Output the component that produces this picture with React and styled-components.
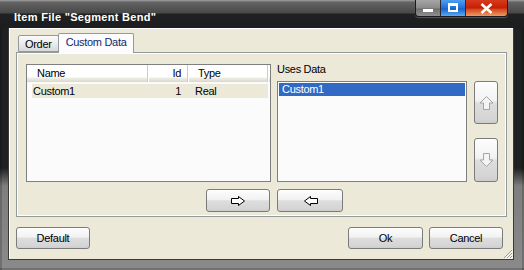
import React from 'react';
import styled, { createGlobalStyle } from 'styled-components';

const Global = createGlobalStyle`
  html, body { margin: 0; padding: 0; background: #fff; }
  body { font-family: "Liberation Sans", Arial, sans-serif; font-size: 11px; }
  * { box-sizing: border-box; }
`;

const Window = styled.div`
  width: 524px;
  height: 270px;
  display: flex;
  flex-direction: column;
  overflow: hidden;
  background: linear-gradient(to bottom, #1f2022 0px, #1f2022 168px, #4a4a4a 176px, #7e7e7e 186px, #8a8a8a 100%);
  box-shadow: inset 2px 0 0 rgba(0,0,0,0.18), inset -2px 0 0 rgba(0,0,0,0.18), inset 0 -2px 0 rgba(0,0,0,0.18);
`;

const TitleBar = styled.div`
  height: 28px;
  flex: none;
  display: flex;
  align-items: flex-start;
  padding: 0 16px 0 14px;
  background: linear-gradient(to bottom, #9a9a9a 0px, #8c8c8c 1px, #646464 2px, #484848 13px, #1f2123 14px, #1c1d1f 100%);
`;

const Title = styled.div`
  margin-top: 11px;
  color: #fff;
  font-weight: bold;
  font-size: 11px;
  line-height: 12px;
  letter-spacing: 0.3px;
  white-space: nowrap;
`;

const Captions = styled.div`
  margin-left: auto;
  display: flex;
  height: 17px;
  border: 1px solid #1a1a1a;
  border-top: none;
  border-radius: 0 0 4px 4px;
  overflow: hidden;
  box-shadow: 0 1px 1px rgba(255,255,255,0.25);
`;

const CapBtn = styled.div`
  width: ${p => p.$w}px;
  height: 100%;
  display: flex;
  align-items: flex-start;
  justify-content: center;
  border-left: ${p => (p.$first ? 'none' : '1px solid #2a2a2a')};
  background: ${p => p.$bg};
`;

const MinDash = styled.div`
  margin-top: 9px;
  width: 10px;
  height: 3px;
  background: #fff;
`;

const MaxBox = styled.div`
  margin-top: 3px;
  width: 10px;
  height: 9px;
  border: 2px solid #fff;
  border-top-width: 3px;
`;

const Client = styled.div`
  flex: 1;
  position: relative;
  margin: 0 10px 10px 8px;
  border: 1px solid #3a3a3a;
  border-top: none;
  background: #ece9d8;
  box-shadow: inset 1px 1px 0 #fff;
  padding: 5px 6px 10px 7px;
  display: flex;
  flex-direction: column;
  color: #000;
`;

const TabStrip = styled.div`
  height: 20px;
  margin-bottom: -1px;
  padding-left: 2px;
  display: flex;
  align-items: flex-end;
  position: relative;
  z-index: 1;
`;

const Tab = styled.div`
  height: ${p => (p.$active ? 20 : 17)}px;
  margin-bottom: ${p => (p.$active ? 0 : 1)}px;
  padding: ${p => (p.$active ? '3px 6px 0 7px' : '3px 6px 0 6px')};
  border: 1px solid #919b9c;
  border-bottom: ${p => (p.$active ? 'none' : '1px solid #919b9c')};
  border-radius: 2px 2px 0 0;
  line-height: 11px;
  letter-spacing: -0.3px;
  color: ${p => (p.$active ? '#10266e' : '#000')};
  background: ${p => (p.$active ? '#fcfcfe' : 'linear-gradient(to bottom, #fafafa 0%, #ececec 50%, #d8d8d8 100%)')};
  margin-right: ${p => (p.$active ? 0 : -1)}px;
  white-space: nowrap;
`;

const Panel = styled.div`
  border: 1px solid #919b9c;
  box-shadow: inset 1px 1px 0 #fff, inset -1px -1px 0 #fff;
  background: #ece9d8;
  padding: 11px 8px 4px 9px;
  display: flex;
  flex-direction: column;
  gap: 7px;
`;

const TopRow = styled.div`
  display: flex;
  height: 118px;
`;

const ListBox = styled.div`
  width: ${p => p.$w}px;
  height: ${p => p.$h}px;
  border: 1px solid #7f7f7f;
  background: #fbfbfb;
  padding: ${p => p.$pad || 0}px;
  flex: none;
`;

const Header = styled.div`
  display: flex;
  height: 17px;
  background: linear-gradient(to bottom, #fff 0px, #fff 12px, #efeee6 13px, #e6e4d8 15px, #d9d7cb 17px);
`;

const HeadCell = styled.div`
  width: ${p => p.$w}px;
  height: 100%;
  padding: 0 ${p => p.$pr || 0}px 0 ${p => p.$pl || 0}px;
  text-align: ${p => p.$align || 'left'};
  line-height: 16px;
  letter-spacing: -0.3px;
  border-right: 1px solid #cfcdc2;
  box-shadow: 1px 0 0 #fff;
  white-space: nowrap;
`;

const Row = styled.div`
  display: flex;
  margin: 2px 0 0 5px;
  width: 236px;
  height: 14px;
  background: #ece9d8;
`;

const Cell = styled.div`
  width: ${p => p.$w}px;
  padding: 0 ${p => p.$pr || 0}px 0 ${p => p.$pl || 0}px;
  text-align: ${p => p.$align || 'left'};
  line-height: 14px;
  letter-spacing: -0.3px;
  white-space: nowrap;
`;

const RightCol = styled.div`
  width: 190px;
  margin-left: 6px;
  display: flex;
  flex-direction: column;
`;

const Label = styled.div`
  height: 17px;
  line-height: 11px;
  letter-spacing: -0.3px;
`;

const SelItem = styled.div`
  height: 13px;
  line-height: 13px;
  padding-left: 3px;
  background: #316ac5;
  color: #fff;
  letter-spacing: -0.3px;
`;

const SideCol = styled.div`
  width: 24px;
  margin-left: 7px;
  padding-top: 17px;
  display: flex;
  flex-direction: column;
  gap: 14px;
`;

const Button = styled.div`
  width: ${p => p.$w}px;
  height: ${p => p.$h || 22}px;
  flex: none;
  border: 1px solid #7b7b7b;
  border-radius: 3px;
  background: linear-gradient(to bottom, #fdfdfd 0%, #f2f2f2 45%, #dddddd 52%, #d5d5d5 88%, #cdcdcd 100%);
  box-shadow: inset 0 1px 0 #fff;
  display: flex;
  align-items: center;
  justify-content: center;
  letter-spacing: -0.3px;
  line-height: 12px;
  color: #000;
`;

const ArrowRow = styled.div`
  display: flex;
  height: 23px;
`;

const ArrowCell = styled.div`
  width: ${p => p.$w}px;
  margin-left: ${p => p.$ml || 0}px;
  display: flex;
  justify-content: ${p => p.$justify};
`;

const ButtonRow = styled.div`
  margin-top: 10px;
  margin-right: 4px;
  display: flex;
  gap: 6px;
`;

const Spacer = styled.div`
  flex: 1;
`;

const Grip = styled.svg`
  position: absolute;
  right: 0;
  bottom: 0;
`;

const ArrowH = ({ dir }) => (
  <svg width="15" height="10" viewBox="0 0 15 10" style={{ transform: dir === 'left' ? 'scaleX(-1)' : 'none' }}>
    <polygon points="0.5,2.5 7.5,2.5 7.5,0.5 13.5,5 7.5,9.5 7.5,7.5 0.5,7.5" fill="#fff" stroke="#000" strokeWidth="1" />
  </svg>
);

const ArrowV = ({ dir }) => (
  <svg width="15" height="14" viewBox="0 0 15 14" style={{ transform: dir === 'down' ? 'scaleY(-1)' : 'none' }}>
    <polygon points="7.5,0.5 14,7 10.5,7 10.5,13.5 4.5,13.5 4.5,7 1,7" fill="#f4f4f4" stroke="#a4a4a4" strokeWidth="1" />
  </svg>
);

export default function App() {
  return (
    <>
      <Global />
      <Window>
        <TitleBar>
          <Title>Item File "Segment Bend"</Title>
          <Captions>
            <CapBtn $first $w={24} $bg="linear-gradient(to bottom, #a6a6a6 0%, #8a8a8a 50%, #6e6e6e 55%, #8e8e8e 100%)">
              <MinDash />
            </CapBtn>
            <CapBtn $w={25} $bg="linear-gradient(to bottom, #4d9ef0 0%, #1f6fd8 50%, #1464d0 55%, #5eaaf0 100%)">
              <MaxBox />
            </CapBtn>
            <CapBtn $w={42} $bg="linear-gradient(to bottom, #d83a1c 0%, #c41f06 50%, #d2481c 58%, #ec9a66 100%)">
              <svg width="13" height="11" viewBox="0 0 13 11" style={{ marginTop: 3 }}>
                <path d="M1.5 1 L11.5 10 M11.5 1 L1.5 10" stroke="#fff" strokeWidth="2.6" />
              </svg>
            </CapBtn>
          </Captions>
        </TitleBar>
        <Client>
          <TabStrip>
            <Tab>Order</Tab>
            <Tab $active>Custom Data</Tab>
          </TabStrip>
          <Panel>
            <TopRow>
              <ListBox $w={245} $h={118}>
                <Header>
                  <HeadCell $w={121} $pl={10}>Name</HeadCell>
                  <HeadCell $w={40} $align="right" $pr={6}>Id</HeadCell>
                  <HeadCell $w={80} $pl={10}>Type</HeadCell>
                </Header>
                <Row>
                  <Cell $w={116} $pl={1}>Custom1</Cell>
                  <Cell $w={40} $align="right" $pr={7}>1</Cell>
                  <Cell $w={80} $pl={7}>Real</Cell>
                </Row>
              </ListBox>
              <RightCol>
                <Label>Uses Data</Label>
                <ListBox $w={190} $h={101} $pad={1}>
                  <SelItem>Custom1</SelItem>
                </ListBox>
              </RightCol>
              <SideCol>
                <Button $w={24} $h={43}><ArrowV dir="up" /></Button>
                <Button $w={24} $h={44}><ArrowV dir="down" /></Button>
              </SideCol>
            </TopRow>
            <ArrowRow>
              <ArrowCell $w={245} $justify="flex-end">
                <Button $w={64} $h={23} style={{ marginRight: 1 }}><ArrowH dir="right" /></Button>
              </ArrowCell>
              <ArrowCell $w={190} $ml={6} $justify="flex-start">
                <Button $w={66} $h={23}><ArrowH dir="left" /></Button>
              </ArrowCell>
            </ArrowRow>
          </Panel>
          <ButtonRow>
            <Button $w={74}>Default</Button>
            <Spacer />
            <Button $w={75}>Ok</Button>
            <Button $w={74}>Cancel</Button>
          </ButtonRow>
          <Grip width="11" height="11" viewBox="0 0 11 11">
            <path d="M10 2 L2 10 M10 5 L5 10 M10 8 L8 10" stroke="#9a9a9a" strokeWidth="1" />
            <path d="M11 3 L3 11 M11 6 L6 11 M11 9 L9 11" stroke="#fff" strokeWidth="1" />
          </Grip>
        </Client>
      </Window>
    </>
  );
}
